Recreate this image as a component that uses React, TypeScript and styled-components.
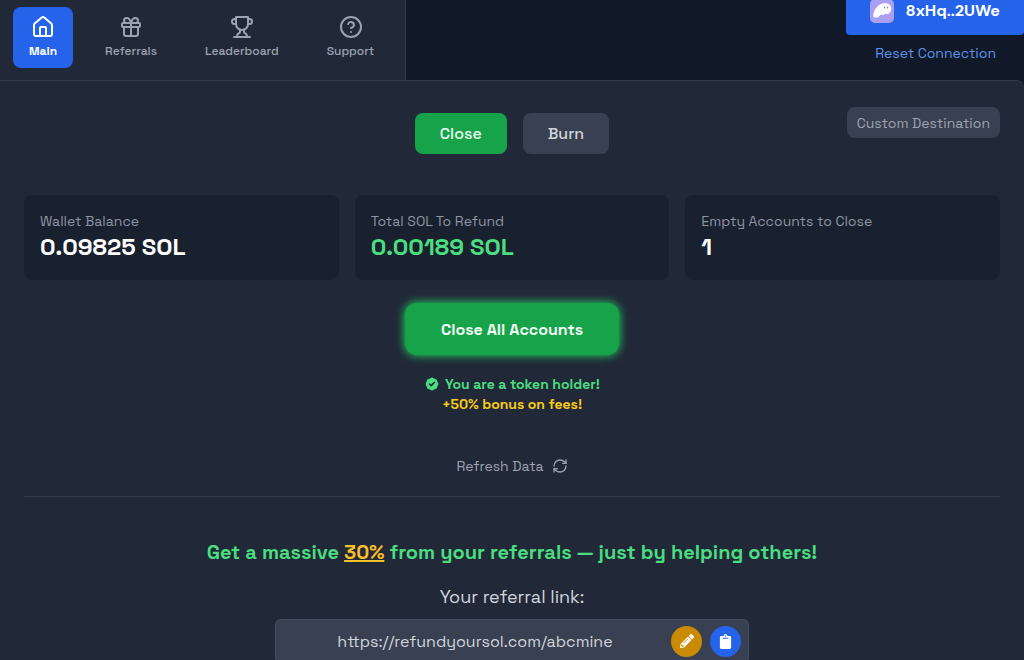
import React from "react";
import styled, { createGlobalStyle, css } from "styled-components";
import { House, Gift, CircleHelp, RefreshCw } from "lucide-react";
import { HiBadgeCheck } from "react-icons/hi";
import { FaPencilAlt, FaClipboard } from "react-icons/fa";

const GlobalStyle = createGlobalStyle`
  *, *::before, *::after { box-sizing: border-box; }
  html { background: #111827; }
  body { margin: 0; background: #111827; overflow-x: hidden; scrollbar-width: none; }
  html { scrollbar-width: none; }
  body, button, input { font-family: "Space Grotesk", Inter, sans-serif; }
  button { border: 0; cursor: pointer; }
`;

const Page = styled.div`
  min-height: 100vh;
  display: flex;
  flex-direction: column;
`;

const TopBar = styled.header`
  display: flex;
  justify-content: space-between;
  align-items: stretch;
  height: 80px;
`;

const Nav = styled.nav`
  display: flex;
  align-items: flex-start;
  gap: 16px;
  padding: 7px 15px 0 13px;
  background: #212938;
  border-right: 1px solid #343c4b;
`;

const NavLink = styled.a<{ $active?: boolean }>`
  display: flex;
  flex-direction: column;
  align-items: center;
  gap: 4px;
  padding: 8px 16px;
  border-radius: 8px;
  font-size: 12px;
  line-height: 16px;
  font-weight: 500;
  text-decoration: none;
  height: 61px;
  color: #9ca3af;
  ${(p) =>
    p.$active &&
    css`
      color: #ffffff;
      background: #2563eb;
      font-weight: 700;
    `}
`;

const Wallet = styled.div`
  display: flex;
  flex-direction: column;
  align-items: flex-end;
  gap: 8px;
`;

const WalletButton = styled.button`
  display: flex;
  align-items: center;
  gap: 12px;
  height: 35px;
  padding: 0 24px 14px;
  border-radius: 0 0 4px 4px;
  background: #2563eb;
  color: #ffffff;
  font-family: "DM Sans", Inter, sans-serif;
  font-size: 16px;
  font-weight: 700;
`;

const ResetButton = styled.button`
  margin-right: 28px;
  padding: 0;
  background: none;
  color: #5b93ec;
  font-size: 14px;
  line-height: 20px;
`;

const Panel = styled.main`
  flex: 1;
  display: flex;
  flex-direction: column;
  padding: 0 24px;
  background: #212938;
  border-top: 1px solid #343c4b;
  border-radius: 0 8px 0 0;
`;

const Actions = styled.div`
  display: grid;
  grid-template-columns: 1fr auto 1fr;
  align-items: start;
  padding-top: 26px;
`;

const Modes = styled.div`
  grid-column: 2;
  display: flex;
  gap: 16px;
  padding-top: 6px;
`;

const ModeButton = styled.button<{ $active?: boolean }>`
  height: 41px;
  padding: 0 25px;
  border-radius: 8px;
  font-size: 16px;
  font-weight: 500;
  background: ${(p) => (p.$active ? "#16a34a" : "#394052")};
  color: ${(p) => (p.$active ? "#e8fbee" : "#d1d5db")};
`;

const DestinationButton = styled.button`
  justify-self: end;
  height: 31px;
  padding: 0 10px;
  border-radius: 8px;
  background: #394052;
  color: #9ca3af;
  font-size: 14px;
`;

const Stats = styled.section`
  display: grid;
  grid-template-columns: repeat(3, 1fr);
  gap: 16px;
  margin-top: 41px;
`;

const StatCard = styled.div`
  height: 85px;
  padding: 16px;
  border-radius: 8px;
  background: #19202e;
`;

const StatLabel = styled.div`
  font-size: 14px;
  line-height: 20px;
  color: #8d95a3;
`;

const StatValue = styled.div<{ $green?: boolean }>`
  font-size: 24px;
  line-height: 32px;
  font-weight: 700;
  color: ${(p) => (p.$green ? "#4ade80" : "#ffffff")};
`;

const Center = styled.section`
  display: flex;
  flex-direction: column;
  align-items: center;
`;

const CloseAllButton = styled.button`
  height: 52px;
  margin-top: 23px;
  padding: 0 36px;
  border-radius: 12px;
  background: #16a34a;
  box-shadow: 0 0 8px 1px #22c55e;
  color: #f0fdf4;
  font-size: 16px;
  font-weight: 600;
`;

const Holder = styled.p<{ $bonus?: boolean }>`
  display: flex;
  align-items: center;
  gap: 5px;
  margin: 0;
  font-size: 14px;
  line-height: 20px;
  font-weight: 600;
  color: ${(p) => (p.$bonus ? "#facc15" : "#4ade80")};
`;

const HolderNote = styled.div`
  display: flex;
  flex-direction: column;
  align-items: center;
  margin-top: 19px;
`;

const RefreshButton = styled.button`
  display: flex;
  align-items: center;
  gap: 8px;
  margin: 42px 0 20px;
  padding: 0;
  background: none;
  color: #9ca3af;
  font-size: 14px;
  line-height: 20px;
`;

const Referral = styled(Center)`
  border-top: 1px solid #343c4b;
  padding-top: 41px;
`;

const Headline = styled.h2`
  margin: 0;
  font-size: 20px;
  line-height: 28px;
  font-weight: 700;
  color: #4ade80;
`;

const Percent = styled.span`
  color: #fbbf24;
  text-decoration: underline;
`;

const LinkLabel = styled.label`
  margin-top: 17px;
  font-size: 18px;
  line-height: 28px;
  color: #d1d5db;
`;

const LinkBox = styled.div`
  display: flex;
  align-items: center;
  gap: 8px;
  width: 100%;
  max-width: 474px;
  height: 44px;
  margin-top: 8px;
  padding: 0 7px 0 11px;
  border: 1px solid #464e60;
  border-radius: 6px;
  background: #394052;
`;

const LinkInput = styled.input`
  flex: 1;
  min-width: 0;
  padding: 0;
  border: 0;
  outline: 0;
  background: none;
  color: #d1d5db;
  font-size: 16px;
  text-align: center;
`;

const RoundButton = styled.button<{ $color: string }>`
  display: grid;
  place-items: center;
  width: 31px;
  height: 31px;
  padding: 0;
  border-radius: 50%;
  background: ${(p) => p.$color};
  color: #ffffff;
`;

function TrophyIcon() {
  return (
    <svg width="24" height="24" viewBox="0 0 24 24" fill="none" stroke="currentColor" strokeWidth="2" strokeLinecap="round" strokeLinejoin="round" aria-hidden="true">
      <path d="M6 9H4.5a2.5 2.5 0 0 1 0-5H6" />
      <path d="M18 9h1.5a2.5 2.5 0 0 0 0-5H18" />
      <path d="M4 22h16" />
      <path d="M10 14.66V17c0 .55-.47.98-.97 1.21C7.85 18.75 7 20.24 7 22" />
      <path d="M14 14.66V17c0 .55.47.98.97 1.21C16.15 18.75 17 20.24 17 22" />
      <path d="M18 2H6v7a6 6 0 0 0 12 0V2Z" />
    </svg>
  );
}

function GhostLogo() {
  return (
    <svg width="24" height="24" viewBox="0 0 24 24" aria-hidden="true">
      <rect width="24" height="24" rx="5" fill="#ab9ff2" />
      <path d="M3.200 16.500C3.600 10.600 8.600 4.300 14.800 4.300c4 0 6.400 2 6.400 5.200 0 3.300-2.300 5.700-4.300 5.700-.8 0-1.300-.3-1.400-.9-.9 1.200-1.900 1.800-2.800 1.800-.8 0-1.300-.4-1.400-1-1.300 2-3.200 3.500-5.200 3.500-1.800 0-2.900-.8-2.900-2.100z" fill="#ffffff" />
      <ellipse cx="14.600" cy="8.600" rx=".7" ry="1.100" fill="#8f83c9" />
      <ellipse cx="17.600" cy="8.600" rx=".7" ry="1.100" fill="#8f83c9" />
    </svg>
  );
}

export default function App() {
  return (
    <Page>
      <GlobalStyle />
      <TopBar>
        <Nav>
          <NavLink href="#main" $active><House size={24} />Main</NavLink>
          <NavLink href="#referrals"><Gift size={24} />Referrals</NavLink>
          <NavLink href="#leaderboard"><TrophyIcon />Leaderboard</NavLink>
          <NavLink href="#support"><CircleHelp size={24} />Support</NavLink>
        </Nav>
        <Wallet>
          <WalletButton type="button"><GhostLogo />8xHq..2UWe</WalletButton>
          <ResetButton type="button">Reset Connection</ResetButton>
        </Wallet>
      </TopBar>
      <Panel>
        <Actions>
          <Modes>
            <ModeButton type="button" $active>Close</ModeButton>
            <ModeButton type="button">Burn</ModeButton>
          </Modes>
          <DestinationButton type="button">Custom Destination</DestinationButton>
        </Actions>
        <Stats>
          <StatCard><StatLabel>Wallet Balance</StatLabel><StatValue>0.09825 SOL</StatValue></StatCard>
          <StatCard><StatLabel>Total SOL To Refund</StatLabel><StatValue $green>0.00189 SOL</StatValue></StatCard>
          <StatCard><StatLabel>Empty Accounts to Close</StatLabel><StatValue>1</StatValue></StatCard>
        </Stats>
        <Center>
          <CloseAllButton type="button">Close All Accounts</CloseAllButton>
          <HolderNote>
            <Holder><HiBadgeCheck size={16} />You are a token holder!</Holder>
            <Holder $bonus>+50% bonus on fees!</Holder>
          </HolderNote>
          <RefreshButton type="button">Refresh Data<RefreshCw size={16} /></RefreshButton>
        </Center>
        <Referral>
          <Headline>Get a massive <Percent>30%</Percent> from your referrals — just by helping others!</Headline>
          <LinkLabel htmlFor="referral-link">Your referral link:</LinkLabel>
          <LinkBox>
            <LinkInput id="referral-link" readOnly value="https://refundyoursol.com/abcmine" />
            <RoundButton type="button" aria-label="Edit link" $color="#ca8a04"><FaPencilAlt size={14} /></RoundButton>
            <RoundButton type="button" aria-label="Copy link" $color="#2563eb"><FaClipboard size={15} /></RoundButton>
          </LinkBox>
        </Referral>
      </Panel>
    </Page>
  );
}
